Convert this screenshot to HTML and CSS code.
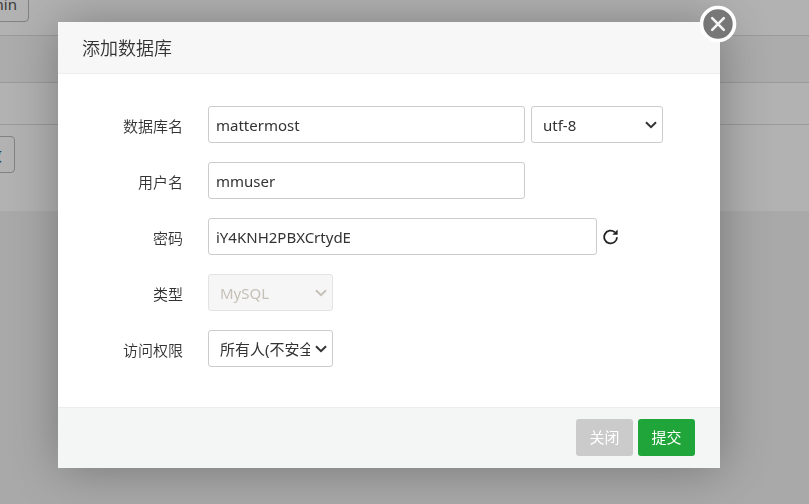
FILE: index.html
```html
<!DOCTYPE html>
<html lang="zh-CN">
<head>
  <meta charset="UTF-8">
  <meta name="viewport" content="width=device-width, initial-scale=1.0">
  <title>添加数据库</title>
  <link rel="stylesheet" href="styles.css">
</head>
<body>

  <!-- 背景页面 -->
  <div class="page">
    <div class="toolbar">
      <button type="button" class="page-btn">phpMyAdmin</button>
    </div>
    <div class="table-head"></div>
    <div class="table-row"></div>
    <div class="table-foot">
      <button type="button" class="page-btn">改</button>
    </div>
  </div>
  <div class="shade"></div>

  <!-- 弹窗 -->
  <form class="layer" onsubmit="return false">
    <h2 class="layer-title">添加数据库</h2>
    <button type="button" class="layer-close" aria-label="关闭弹窗">
      <svg viewBox="0 0 38 38" width="38" height="38">
        <circle cx="19" cy="19" r="16.5" fill="#777" stroke="#fff" stroke-width="3.6"/>
        <path d="M13.2 13.2l11.6 11.6M24.8 13.2L13.2 24.8" stroke="#f4f4f4" stroke-width="2.6" fill="none" stroke-linecap="round"/>
      </svg>
    </button>

    <div class="layer-body">
      <div class="line">
        <label class="tname" for="name">数据库名</label>
        <div class="info">
          <input class="input" id="name" type="text" value="mattermost">
          <div class="select-box">
            <select class="select charset" aria-label="编码">
              <option>utf-8</option>
              <option>utf8mb4</option>
              <option>gbk</option>
              <option>big5</option>
            </select>
            <svg class="arrow" viewBox="0 0 12 8" width="12" height="8"><path d="M1 1.2l5 5 5-5"/></svg>
          </div>
        </div>
      </div>
      <div class="line">
        <label class="tname" for="user">用户名</label>
        <div class="info">
          <input class="input" id="user" type="text" value="mmuser">
        </div>
      </div>
      <div class="line">
        <label class="tname" for="password">密码</label>
        <div class="info">
          <input class="input password" id="password" type="text" value="iY4KNH2PBXCrtydE">
          <button type="button" class="refresh" aria-label="随机密码">
            <svg viewBox="0 0 16 16" width="16" height="16">
              <path d="M14 8.2a6.4 6.4 0 1 1-2.2-5" stroke="#222" stroke-width="1.8" fill="none"/>
              <path d="M14.6 .6v5.2H9.4z" fill="#222"/>
            </svg>
          </button>
        </div>
      </div>
      <div class="line">
        <label class="tname" for="type">类型</label>
        <div class="info">
          <div class="select-box">
            <select class="select" id="type" disabled>
              <option>MySQL</option>
            </select>
            <svg class="arrow" viewBox="0 0 12 8" width="12" height="8"><path d="M1 1.2l5 5 5-5"/></svg>
          </div>
        </div>
      </div>
      <div class="line">
        <label class="tname" for="access">访问权限</label>
        <div class="info">
          <div class="select-box">
            <select class="select" id="access">
              <option>所有人(不安全)</option>
              <option>本地服务器</option>
              <option>指定IP</option>
            </select>
            <svg class="arrow" viewBox="0 0 12 8" width="12" height="8"><path d="M1 1.2l5 5 5-5"/></svg>
          </div>
        </div>
      </div>
    </div>

    <div class="layer-foot">
      <button type="button" class="btn btn-close">关闭</button>
      <button type="submit" class="btn btn-submit">提交</button>
    </div>
  </form>

</body>
</html>
```
FILE: styles.css
```css
* {
  box-sizing: border-box;
}
body {
  margin: 0;
  min-height: 100vh;
  background-color: #f2f2f2;
  color: #333;
  font: 15px/20px "Noto Sans", "Noto Sans CJK SC", sans-serif;
  overflow: hidden;
}
button,
input,
select {
  font: inherit;
  color: inherit;
}

/* 背景页面 */
.page {
  background-color: #fff;
}
.toolbar {
  display: flex;
  align-items: flex-end;
  height: 36px;
  margin-left: -91px;
  padding-bottom: 13px;
  border-bottom: 1px solid #ddd;
}
.table-head {
  height: 47px;
  background-color: #f6f6f6;
  border-bottom: 1px solid #ddd;
}
.table-row {
  height: 42px;
  border-bottom: 1px solid #ddd;
}
.table-foot {
  height: 86px;
  margin-left: -105px;
  padding-top: 11px;
}
.page-btn {
  width: 120px;
  height: 37px;
  padding: 0 12px;
  background-color: #fff;
  border: 1px solid #bbb;
  border-radius: 4px;
  color: #555;
  text-align: right;
}
.table-foot .page-btn {
  color: #368;
}
.shade {
  position: fixed;
  inset: 0;
  background-color: rgba(0, 0, 0, .3);
}

/* 弹窗 */
.layer {
  position: absolute;
  top: 22px;
  left: 58px;
  right: 89px;
  background-color: #fff;
  border-radius: 2px;
  box-shadow: 1px 1px 50px rgba(0, 0, 0, .3);
}
.layer-title {
  height: 52px;
  margin: 0;
  padding: 0 24px;
  background-color: #f7f7f7;
  border-bottom: 1px solid #eee;
  font-size: 18px;
  font-weight: 350;
  line-height: 52px;
}
.layer-close {
  position: absolute;
  top: -17px;
  right: -17px;
  padding: 0;
  border: 0;
  background: none;
  line-height: 0;
  cursor: pointer;
}
.layer-body {
  display: flex;
  flex-direction: column;
  gap: 19px;
  padding: 32px 57px 40px 0;
}
.line {
  display: flex;
  gap: 25px;
}
.tname {
  width: 125px;
  height: 37px;
  text-align: right;
  line-height: 40px;
  font-weight: 350;
}
.info {
  display: flex;
  flex: 1;
  align-items: center;
  gap: 6px;
}
.input {
  width: 317px;
  height: 37px;
  padding: 0 7px;
  border: 1px solid #ccc;
  border-radius: 3px;
  background-color: #fff;
}
.password {
  width: 389px;
}
.select-box {
  position: relative;
}
.select {
  display: block;
  width: 125px;
  height: 37px;
  padding: 0 22px 0 11px;
  border: 1px solid #ccc;
  border-radius: 3px;
  background-color: #fff;
  appearance: none;
}
.charset {
  width: 132px;
}
.arrow {
  position: absolute;
  top: 15px;
  right: 6px;
  fill: none;
  stroke: #333;
  stroke-width: 2;
  pointer-events: none;
}
.select:disabled {
  background-color: #f6f6f6;
  border-color: #e3e3e3;
  color: #c5c1b8;
  opacity: 1;
}
.select:disabled + .arrow {
  stroke: #c5c1b8;
}
.refresh {
  padding: 0;
  border: 0;
  background: none;
  line-height: 0;
  cursor: pointer;
}
.layer-foot {
  display: flex;
  justify-content: flex-end;
  gap: 5px;
  padding: 11px 25px 12px;
  background-color: #f4f6f6;
  border-top: 1px solid #eaeeed;
}
.btn {
  width: 57px;
  height: 37px;
  padding: 0 0 2px;
  border: 0;
  border-radius: 3px;
  color: #fff;
  cursor: pointer;
}
.btn-close {
  background-color: #cbcbcb;
}
.btn-submit {
  background-color: #20a53a;
}
```
